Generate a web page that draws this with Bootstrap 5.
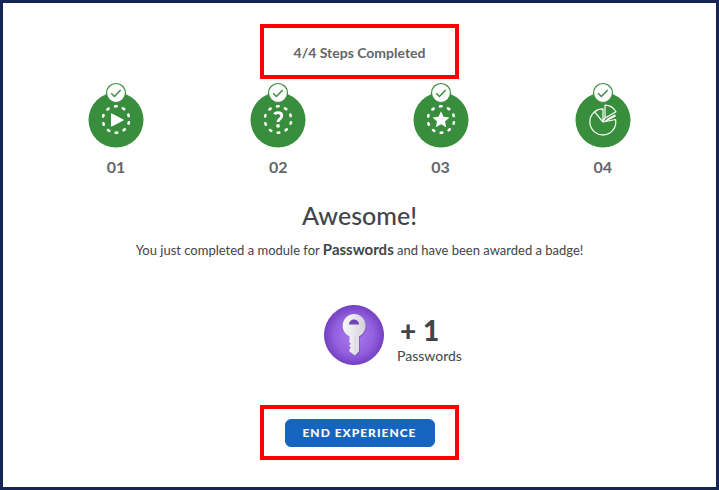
<!DOCTYPE html>
<html lang="en">
<head>
<meta charset="utf-8">
<meta name="viewport" content="width=device-width, initial-scale=1">
<title>Module completed</title>
<link href="https://cdn.jsdelivr.net/npm/bootstrap@5.3.0/dist/css/bootstrap.min.css" rel="stylesheet">
<style>
body { font-family: Lato, "Open Sans", sans-serif; color: #414549; background: #fff; }
.frame { border: 3px solid #172554; padding: 21px 32px 24px; }
.callout { border: 4px solid #f00; width: 199px; height: 55px; }
.progress-title { font-size: 14px; line-height: 20px; font-weight: 700; color: #666; padding-top: 2px; }
.steps { margin-top: 3px; }
.step-icon { width: 56px; height: 66px; }
.step-label { font-size: 16px; line-height: 20px; font-weight: 700; color: #63666b; margin-top: 9px; }
.headline { font-size: 25px; line-height: 36px; font-weight: 500; margin-top: 20px; }
.message { font-size: 13px; line-height: 24px; margin-top: 4px; }
.message strong { font-size: 15px; }
.award { margin-top: 42px; padding-left: 67px; gap: 13px; }
.award-icon { width: 60px; height: 60px; }
.award-count { font-size: 28px; line-height: 28px; font-weight: 900; padding-left: 3px; }
.award-name { font-size: 14px; line-height: 20px; padding-top: 2px; }
.award-text { padding-top: 12px; }
.action { margin-top: 39px; }
.btn-end { --bs-btn-bg: #1565c0; --bs-btn-border-color: #1565c0; --bs-btn-color: #fff; --bs-btn-hover-bg: #0f56a8; --bs-btn-hover-color: #fff; --bs-btn-border-radius: 6px; width: 150px; height: 28px; font-size: 12px; line-height: 16px; font-weight: 900; letter-spacing: 1px; }
</style>
</head>
<body>
<svg class="d-none" aria-hidden="true">
  <defs>
    <g id="step-base">
      <circle cx="28" cy="38" r="27.5" fill="#388e3c"/>
      <circle cx="28" cy="11" r="9.5" fill="#fff" stroke="#388e3c" stroke-width="1.2"/>
      <path d="M23.2 11.3l3.2 3.2 6.3-6.6" fill="none" stroke="#388e3c" stroke-width="1.4"/>
    </g>
    <circle id="step-ring" cx="28" cy="37.5" r="13.2" fill="none" stroke="#fff" stroke-width="2.6" stroke-linecap="round" stroke-dasharray="1.5 6.794" transform="rotate(12 28 37.5)"/>
  </defs>
</svg>
<main class="frame min-vh-100 d-flex flex-column align-items-center text-center">
  <div class="callout d-flex align-items-center justify-content-center">
    <div class="progress-title">4/4 Steps Completed</div>
  </div>
  <div class="steps row g-0 w-100">
    <div class="col-3 d-flex flex-column align-items-center">
      <svg class="step-icon" viewBox="0 0 56 66" aria-hidden="true"><use href="#step-base"/><use href="#step-ring"/><path d="M23.5 31.8v12.4L35.3 38z" fill="#fff" stroke="#fff" stroke-linejoin="round"/></svg>
      <div class="step-label">01</div>
    </div>
    <div class="col-3 d-flex flex-column align-items-center">
      <svg class="step-icon" viewBox="0 0 56 66" aria-hidden="true"><use href="#step-base"/><use href="#step-ring"/><path d="M24.3 32.2C26 30.2 31.8 29.8 31.8 33.8c0 3.1-3.8 2.9-3.8 6.2" fill="none" stroke="#fff" stroke-width="2.8"/><circle cx="28" cy="43.8" r="1.9" fill="#fff"/></svg>
      <div class="step-label">02</div>
    </div>
    <div class="col-3 d-flex flex-column align-items-center">
      <svg class="step-icon" viewBox="0 0 56 66" aria-hidden="true"><use href="#step-base"/><use href="#step-ring"/><path d="M28 29.3l2.5 5.4 5.9.7-4.4 4 1.2 5.8-5.2-2.9-5.2 2.9 1.2-5.8-4.4-4 5.9-.7z" fill="#fff"/></svg>
      <div class="step-label">03</div>
    </div>
    <div class="col-3 d-flex flex-column align-items-center">
      <svg class="step-icon" viewBox="0 0 56 66" aria-hidden="true"><use href="#step-base"/><g fill="none" stroke="#fff" stroke-width="1.2" stroke-linejoin="round"><path d="M28 26.9A13 13 0 1 0 40.6 37.5L28 40zM28 40L19.8 30.2M30 36V23.2A13 13 0 0 1 41 29.8zM30 36l-2 4M32 37.6l8.4-4.8M30.6 38.7l10-4.7M28 27v13"/></g></svg>
      <div class="step-label">04</div>
    </div>
  </div>
  <h1 class="headline mb-0">Awesome!</h1>
  <p class="message mb-0">You just completed a module for <strong>Passwords</strong> and have been awarded a badge!</p>
  <div class="award d-flex align-items-center">
    <svg class="award-icon" viewBox="0 0 60 60" role="img" aria-label="Passwords badge">
      <defs>
        <radialGradient id="violet"><stop stop-color="#ac7cef"/><stop offset=".65" stop-color="#9461df"/><stop offset="1" stop-color="#7541c4"/></radialGradient>
        <linearGradient id="silver"><stop stop-color="#f8f8f8"/><stop offset=".55" stop-color="#e5e5e8"/><stop offset="1" stop-color="#d0d0d6"/></linearGradient>
      </defs>
      <circle cx="30" cy="30" r="29.5" fill="url(#violet)" stroke="#7440bd"/>
      <path d="M26 31.2C21.8 29.5 19 25.6 19 20.8 19 14.2 23.8 9 30 9s11.3 5.2 11.3 11.8c0 4.8-2.8 8.7-6.8 10.4V46L30.6 50 26 46.3v-2.1l1.3-1.6-1.8-1.9 1.8-2-1.8-2 .5-1.5z" fill="#5d379f" opacity=".5" transform="translate(1.2 1)"/>
      <path d="M25.5 31.2C21.5 29.5 18.7 25.6 18.7 20.8 18.7 14.2 23.8 9 30.2 9s11.5 5.2 11.5 11.8c0 4.8-2.8 8.7-6.7 10.4V46.3L31 50.5 25.5 46.6v-2.4l1.4-1.6-1.9-1.9 1.9-2-1.9-2 .5-1.5z" fill="url(#silver)"/>
      <path d="M25 19.5c0-2.8 2.2-5 5-5s5 2.2 5 5z" fill="#7044b5"/>
      <path d="M31 31v17" stroke="#d6d6da"/>
    </svg>
    <div class="award-text text-start">
      <div class="award-count">+ 1</div>
      <div class="award-name">Passwords</div>
    </div>
  </div>
  <div class="action callout d-flex align-items-center justify-content-center">
    <button type="button" class="btn btn-end p-0">END EXPERIENCE</button>
  </div>
</main>
<script src="https://cdn.jsdelivr.net/npm/bootstrap@5.3.0/dist/js/bootstrap.bundle.min.js"></script>
</body>
</html>
